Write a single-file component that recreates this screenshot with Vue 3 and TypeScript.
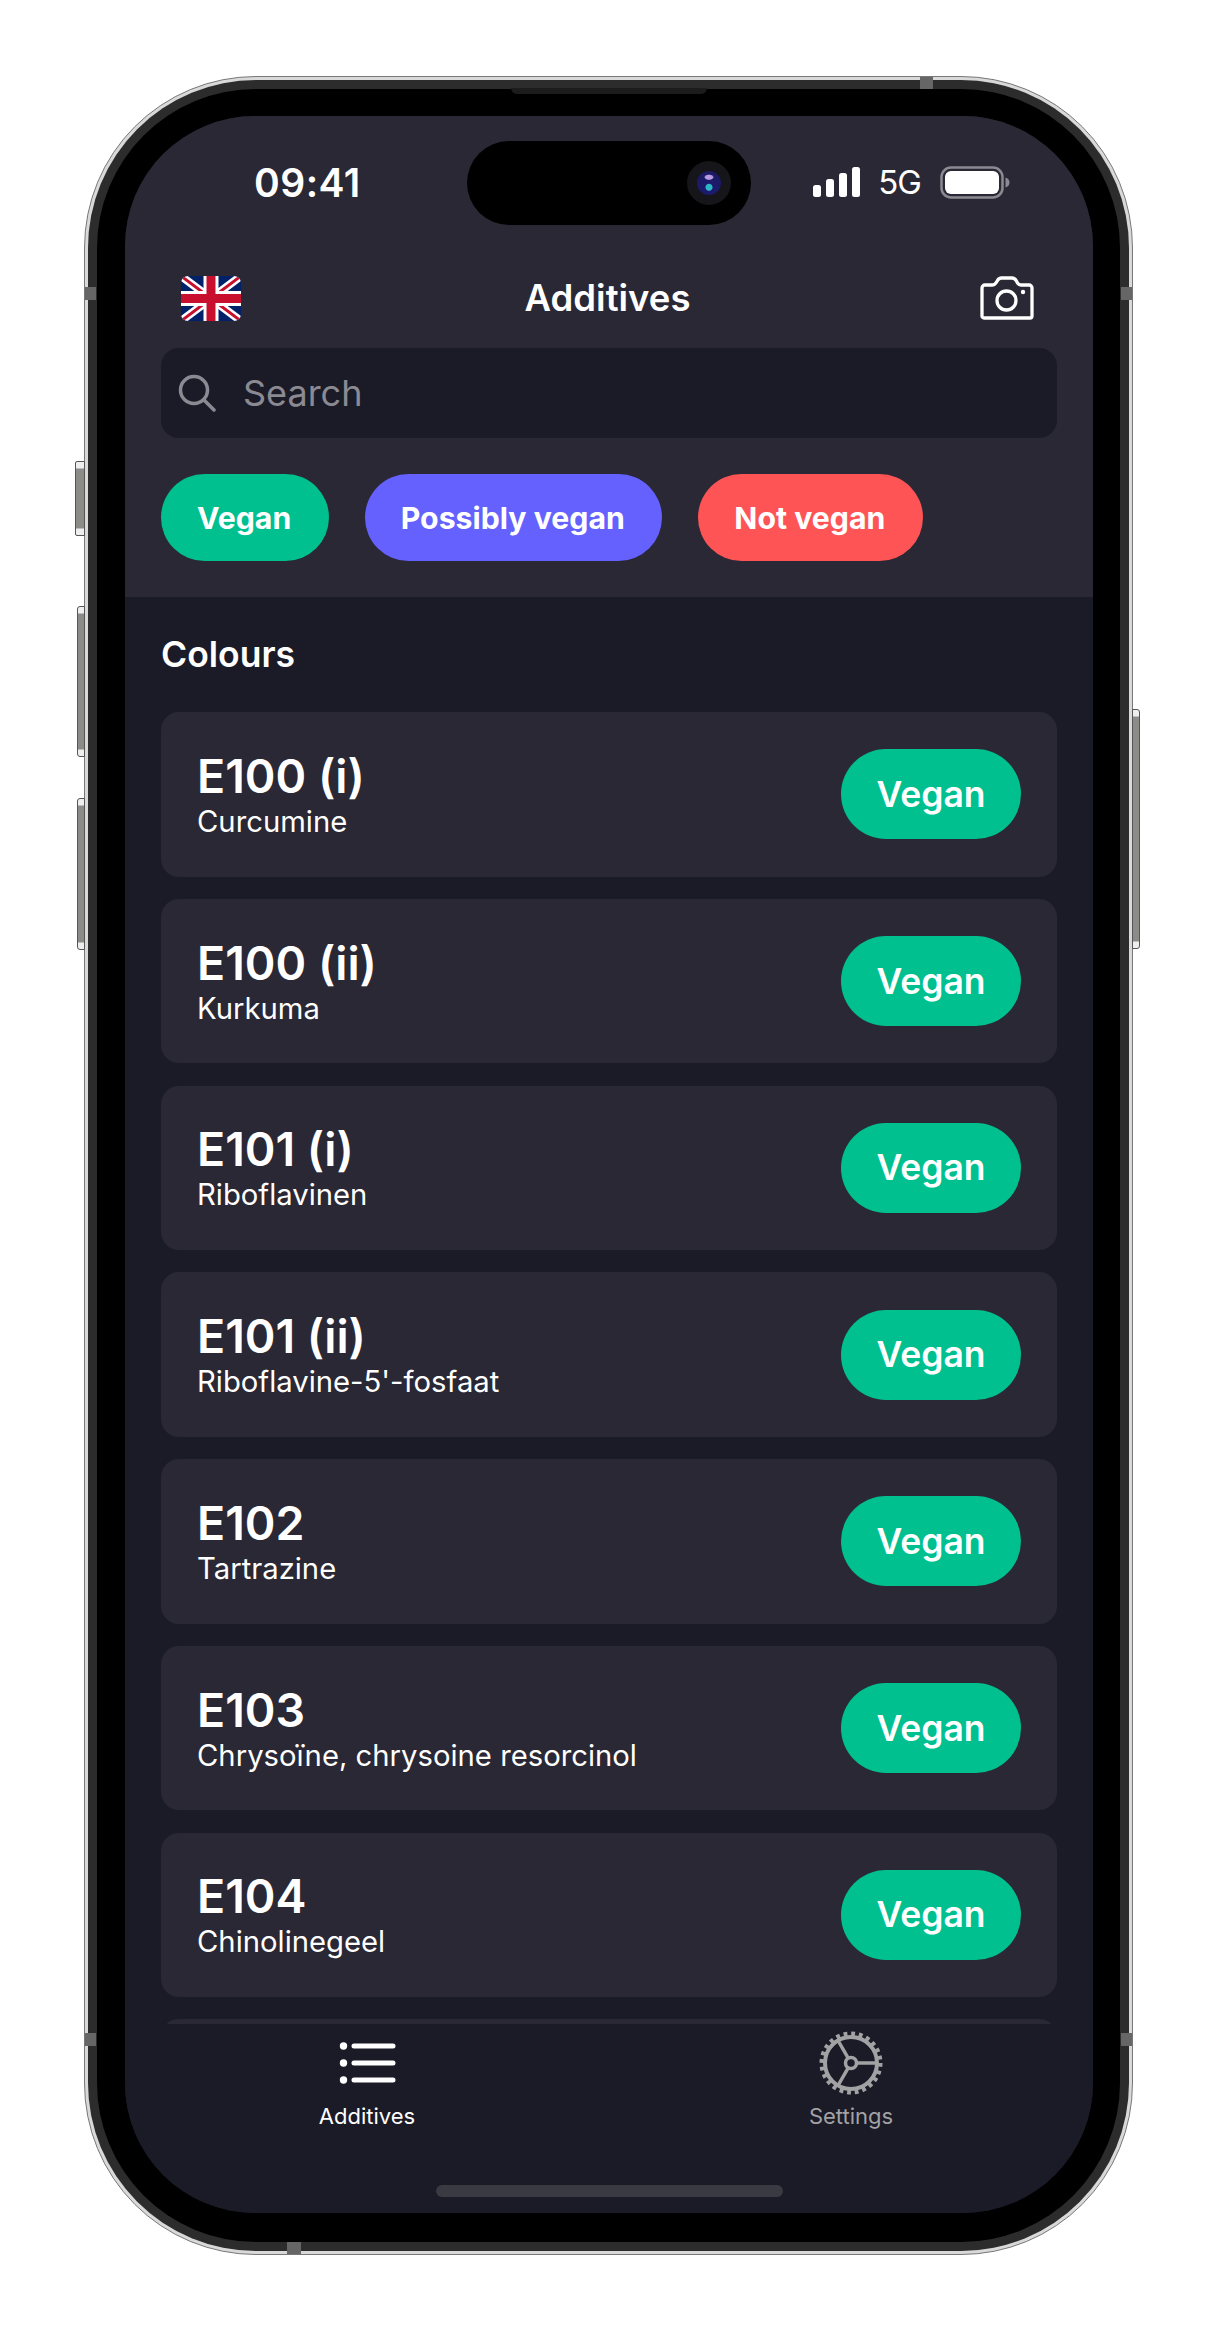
<script setup lang="ts">
import { ref } from 'vue'

interface Additive {
  code: string
  name: string
}

const additives = ref<Additive[]>([
  { code: 'E100 (i)', name: 'Curcumine' },
  { code: 'E100 (ii)', name: 'Kurkuma' },
  { code: 'E101 (i)', name: 'Riboflavinen' },
  { code: 'E101 (ii)', name: "Riboflavine-5'-fosfaat" },
  { code: 'E102', name: 'Tartrazine' },
  { code: 'E103', name: 'Chrysoïne, chrysoine resorcinol' },
  { code: 'E104', name: 'Chinolinegeel' },
])

const filters = [
  { label: 'Vegan', cls: 'green' },
  { label: 'Possibly vegan', cls: 'purple' },
  { label: 'Not vegan', cls: 'red' },
]

const signalBars = [12, 18, 24, 30]
</script>

<template>
  <div class="page">
    <div class="phone">
      <span class="side mute"></span>
      <span class="side vol-up"></span>
      <span class="side vol-down"></span>
      <span class="side power"></span>
      <span class="band band-top"></span>
      <span class="band band-bottom"></span>
      <span class="band band-lt"></span>
      <span class="band band-rt"></span>
      <span class="band band-lb"></span>
      <span class="band band-rb"></span>

      <div class="bezel">
        <div class="glass">
          <span class="speaker"></span>
          <div class="screen">
            <div class="island">
              <span class="lens"><span class="lens-in"></span></span>
            </div>

            <header class="top">
              <div class="status">
                <span class="time">09:41</span>
                <div class="status-right">
                  <div class="signal">
                    <i v-for="h in signalBars" :key="h" :style="{ height: h + 'px' }"></i>
                  </div>
                  <span class="net">5G</span>
                  <svg class="battery" width="70" height="33" viewBox="0 0 70 33">
                    <rect x="1.5" y="1.5" width="61" height="30" rx="9.5" fill="none" stroke="#8b8a92" stroke-width="2.5" />
                    <rect x="5" y="5" width="54" height="23" rx="6" fill="#fff" />
                    <path d="M65.5 11.5c2.500.6 4 2.600 4 5s-1.500 4.400-4 5z" fill="#8b8a92" />
                  </svg>
                </div>
              </div>

              <div class="nav">
                <svg class="flag" width="60" height="45" viewBox="0 0 60 45">
                  <defs>
                    <clipPath id="flag-clip"><rect width="60" height="45" rx="7" /></clipPath>
                  </defs>
                  <g clip-path="url(#flag-clip)">
                    <rect width="60" height="45" fill="#012169" />
                    <path d="M0 0L60 45M60 0L0 45" stroke="#fff" stroke-width="8" />
                    <path d="M0 0L30 22.500M60 45L30 22.500M60 0L30 22.500M0 45L30 22.500" stroke="#c8102e" stroke-width="3" />
                    <path d="M30 0V45M0 22.500H60" stroke="#fff" stroke-width="15" />
                    <path d="M30 0V45M0 22.500H60" stroke="#c8102e" stroke-width="9" />
                  </g>
                </svg>
                <h1>Additives</h1>
                <svg class="camera" width="54" height="44" viewBox="0 0 54 44" fill="none" stroke="#fff" stroke-width="3.300">
                  <path d="M5 9h7.500c1.500 0 2.500-.7 3.300-1.900l1.500-2.300C18.300 3 19.600 2 21.500 2h10.500c1.900 0 3.300 1 4.300 2.800l1.300 2.300c.8 1.200 1.900 1.900 3.400 1.900H49c1.700 0 3 1.300 3 3v28c0 1.100-.9 2-2 2H4c-1.100 0-2-.9-2-2V12c0-1.700 1.300-3 3-3z" stroke-linejoin="round" />
                  <circle cx="26.500" cy="24.500" r="9.500" />
                  <circle cx="43" cy="16" r="2.200" fill="#fff" stroke="none" />
                </svg>
              </div>

              <div class="search">
                <svg width="38" height="38" viewBox="0 0 38 38" fill="none" stroke="#8b8a92" stroke-width="3.500" stroke-linecap="round">
                  <circle cx="16" cy="16" r="13.500" />
                  <path d="M26 26l10 10" />
                </svg>
                <span>Search</span>
              </div>

              <div class="pills">
                <span v-for="f in filters" :key="f.label" class="pill" :class="f.cls">{{ f.label }}</span>
              </div>
            </header>

            <main class="list">
              <h2>Colours</h2>
              <div class="cards">
                <div v-for="a in additives" :key="a.code" class="card">
                  <div class="card-text">
                    <div class="code">{{ a.code }}</div>
                    <div class="name">{{ a.name }}</div>
                  </div>
                  <span class="badge">Vegan</span>
                </div>
                <!-- next row, only its top edge peeks out above the tab bar -->
                <div class="card"></div>
              </div>
            </main>

            <footer class="tabbar">
              <div class="tabs">
                <div class="tab active">
                  <svg width="64" height="64" viewBox="0 0 64 64">
                    <g fill="#fff">
                      <circle cx="8.500" cy="15" r="3.700" />
                      <circle cx="8.500" cy="32" r="3.700" />
                      <circle cx="8.500" cy="49" r="3.700" />
                    </g>
                    <path d="M19 15h39M19 32h39M19 49h39" stroke="#fff" stroke-width="5" stroke-linecap="round" />
                  </svg>
                  <span>Additives</span>
                </div>
                <div class="tab">
                  <svg width="64" height="64" viewBox="0 0 64 64" fill="none" stroke="#a2a2a4">
                    <circle cx="32" cy="32" r="26" stroke-width="4" />
                    <circle cx="32" cy="32" r="28.500" stroke-width="6" stroke-dasharray="3.730 3.730" />
                    <circle cx="32" cy="32" r="5.500" stroke-width="3.500" />
                    <path d="M37.500 32H58M29.200 36.800L19 54.500M29.200 27.200L19 9.500" stroke-width="3.500" />
                  </svg>
                  <span>Settings</span>
                </div>
              </div>
              <div class="home"></div>
            </footer>
          </div>
        </div>
      </div>
    </div>
  </div>
</template>

<style>
html,
body {
  margin: 0;
  background: #fff;
}
</style>

<style scoped>
.page {
  height: 2351px;
  padding: 76px 0 0 84px;
  box-sizing: border-box;
  display: flex;
  align-items: flex-start;
  font-family: Inter, "Liberation Sans", sans-serif;
  color: #fff;
}

.phone {
  position: relative;
  width: 1049px;
  height: 2179px;
  box-sizing: border-box;
  border: 1px solid #777;
  border-radius: 172px;
  padding: 3px;
  background: #d9d9d9;
}

.bezel {
  height: 100%;
  box-sizing: border-box;
  padding: 9px;
  border-radius: 168px;
  background: #2c2c2c;
}

.glass {
  position: relative;
  height: 100%;
  box-sizing: border-box;
  padding: 27px 27px 29px 28px;
  border-radius: 159px;
  background: #000;
}

.speaker {
  position: absolute;
  left: 50%;
  top: -1px;
  width: 196px;
  height: 6px;
  margin-left: -98px;
  border-radius: 0 0 6px 6px;
  background: #1c1c1c;
}

.side {
  position: absolute;
  width: 8px;
  box-sizing: border-box;
  border: 1px solid #555;
  background: linear-gradient(#eee 0, #eee 6px, #8d8b88 7px, #8d8b88 calc(100% - 7px), #eee calc(100% - 6px));
}

.mute {
  left: -10px;
  top: 384px;
  width: 10px;
  height: 75px;
  border-radius: 2px 0 0 2px;
}

.vol-up {
  left: -8px;
  top: 529px;
  height: 151px;
  border-radius: 3px 0 0 3px;
}

.vol-down {
  left: -8px;
  top: 721px;
  height: 152px;
  border-radius: 3px 0 0 3px;
}

.power {
  right: -8px;
  top: 632px;
  height: 240px;
  border-radius: 0 3px 3px 0;
}

.band {
  position: absolute;
  z-index: 1;
  background: #666;
}

.band-top {
  top: 0;
  right: 199px;
  width: 13px;
  height: 12px;
}

.band-bottom {
  bottom: 0;
  left: 202px;
  width: 14px;
  height: 12px;
}

.band-lt,
.band-rt,
.band-lb,
.band-rb {
  width: 11px;
  height: 13px;
}

.band-lt {
  left: 0;
  top: 210px;
}

.band-rt {
  right: 0;
  top: 210px;
}

.band-lb {
  left: 0;
  top: 1956px;
}

.band-rb {
  right: 0;
  top: 1956px;
}

.screen {
  position: relative;
  height: 100%;
  display: flex;
  flex-direction: column;
  overflow: hidden;
  border-radius: 130px;
  background: #1b1a27;
}

.island {
  position: absolute;
  left: 342px;
  top: 25px;
  width: 284px;
  height: 84px;
  border-radius: 42px;
  background: #000;
}

.lens {
  position: absolute;
  right: 20px;
  top: 20px;
  width: 44px;
  height: 44px;
  border-radius: 50%;
  background: #15151a;
  display: flex;
  align-items: center;
  justify-content: center;
}

.lens-in {
  width: 24px;
  height: 24px;
  border-radius: 50%;
  background:
    radial-gradient(ellipse 5px 3px at 50% 26%, #b79ae0 0 70%, transparent 100%),
    radial-gradient(circle at 50% 68%, #2bb7c4 0 3px, #1d1a6e 4px, #1b1a5c 100%);
}

.top {
  background: #2a2834;
  padding-bottom: 36px;
}

.status {
  height: 132px;
  display: flex;
  align-items: center;
  padding: 0 83px 0 129px;
}

.time {
  font-size: 39px;
  font-weight: 600;
  letter-spacing: 0.5px;
}

.status-right {
  margin-left: auto;
  display: flex;
  align-items: center;
}

.signal {
  display: flex;
  align-items: flex-end;
  gap: 5px;
  height: 30px;
}

.signal i {
  width: 8px;
  border-radius: 2.500px;
  background: #fff;
}

.net {
  margin: 0 19px 0 18px;
  font-size: 33px;
  font-weight: 400;
  letter-spacing: -1px;
}

.nav {
  height: 100px;
  display: grid;
  grid-template-columns: 1fr auto 1fr;
  align-items: center;
  padding: 0 59px 0 56px;
}

.nav h1 {
  margin: 0;
  font-size: 36.500px;
  font-weight: 600;
}

.camera {
  justify-self: end;
}

.search {
  height: 90px;
  margin: 0 36px;
  padding-left: 17px;
  display: flex;
  align-items: center;
  gap: 27px;
  border-radius: 18px;
  background: #1b1a27;
  color: #8b8a92;
  font-size: 36px;
}

.pills {
  display: flex;
  gap: 36px;
  margin: 36px 36px 0;
}

.pill {
  height: 87px;
  padding: 0 37.500px 0 36px;
  display: flex;
  align-items: center;
  border-radius: 44px;
  font-size: 30.250px;
  font-weight: 700;
}

.green {
  background: #00c08f;
}

.purple {
  background: #6461ff;
}

.red {
  background: #ff5455;
}

.list {
  flex: 1;
  min-height: 0;
  overflow: hidden;
  padding: 36px 36px 0;
}

.list h2 {
  margin: 0 0 35px;
  font-size: 35.500px;
  line-height: 44px;
  font-weight: 600;
}

.cards {
  display: flex;
  flex-direction: column;
  gap: 22.250px;
}

.card {
  height: 164.500px;
  flex: none;
  box-sizing: border-box;
  padding: 0 36px;
  display: flex;
  align-items: center;
  justify-content: space-between;
  border-radius: 18px;
  background: #2a2834;
}

.card-text {
  padding-top: 4px;
}

.code {
  font-size: 46.500px;
  line-height: 50px;
  font-weight: 600;
}

.name {
  margin-top: 1px;
  font-size: 29.250px;
  line-height: 40px;
}

.badge {
  width: 180px;
  height: 90px;
  display: flex;
  align-items: center;
  justify-content: center;
  border-radius: 45px;
  background: #00c08f;
  font-size: 35.500px;
  font-weight: 600;
}

.tabbar {
  height: 189px;
  flex: none;
  background: #1b1a27;
  display: flex;
  flex-direction: column;
  align-items: center;
}

.tabs {
  align-self: stretch;
  display: flex;
  padding-top: 7px;
}

.tab {
  flex: 1;
  display: flex;
  flex-direction: column;
  align-items: center;
  gap: 8px;
  color: #a2a2a4;
  font-size: 22px;
  line-height: 26px;
}

.tab svg {
  display: block;
}

.tab.active {
  color: #fff;
}

.home {
  width: 347px;
  height: 12px;
  margin-top: 56px;
  border-radius: 6px;
  background: #3a3a42;
}
</style>
